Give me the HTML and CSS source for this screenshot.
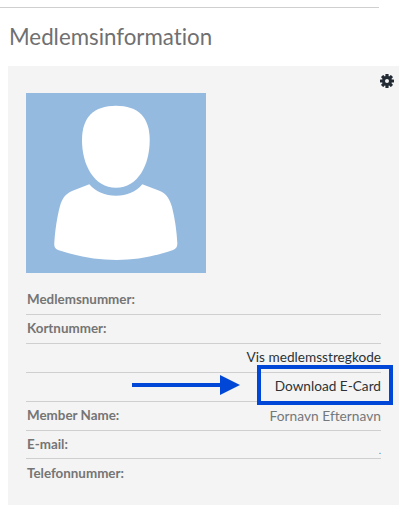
FILE: index.html
```html
<!DOCTYPE html>
<html lang="en">
<head>
    <meta charset="UTF-8">
    <title>Medlemsinformation</title>
    <link rel="stylesheet" href="styles.css">
</head>
<body>
    <div class="page">
        <hr class="top-rule">
        <h1 class="page-title">Medlemsinformation</h1>
        <div class="panel">
            <div class="panel-tools">
                <svg class="gear" viewBox="0 0 14 14" aria-label="Settings">
                    <g fill="#222a33">
                        <rect x="5.4" y="0" width="3.2" height="14" rx="0.5"/>
                        <rect x="5.4" y="0" width="3.2" height="14" rx="0.5" transform="rotate(45 7 7)"/>
                        <rect x="5.4" y="0" width="3.2" height="14" rx="0.5" transform="rotate(90 7 7)"/>
                        <rect x="5.4" y="0" width="3.2" height="14" rx="0.5" transform="rotate(135 7 7)"/>
                    </g>
                    <circle cx="7" cy="7" r="3.6" fill="none" stroke="#222a33" stroke-width="2.6"/>
                    <circle cx="7" cy="7" r="2" fill="#f4f4f4"/>
                </svg>
            </div>
            <svg class="avatar" viewBox="0 0 180 180">
                <rect width="180" height="180" fill="#95badf"/>
                <path fill="#fff" d="M90 12.7C68 12.7 56 24 56 47C56 72 68 94.7 90 94.7C112 94.7 123.7 72 123.7 47C123.7 24 112 12.7 90 12.7Z"/>
                <path fill="#fff" d="M63.3 91.3C70 99 79 102.7 90 102.7C101 102.7 110 99 116.3 91.3L134 98C141 101 144 107 146 114C149 126 150.7 138 151.3 150C151.5 154 150 155.5 147 157C130 163 110 167 90.7 167C70 167 50 163 32 157C29 155.5 28 154 28.3 150C29 138 31 124 34 113C36 106 39 101 46 98Z"/>
            </svg>
            <div class="info-list">
                <div class="info-row"><span class="label">Medlemsnummer:</span></div>
                <div class="info-row"><span class="label">Kortnummer:</span></div>
                <div class="info-row"><span class="link">Vis medlemsstregkode</span></div>
                <div class="info-row"><span class="link">Download E-Card</span></div>
                <div class="info-row"><span class="label">Member Name:</span><span class="value">Fornavn Efternavn</span></div>
                <div class="info-row short"><span class="label">E-mail:</span><span class="dot">.</span></div>
                <div class="info-row no-line"><span class="label">Telefonnummer:</span></div>
            </div>
        </div>
        <!-- annotation drawn over the screenshot -->
        <div class="callout-box"></div>
        <svg class="callout-arrow" width="108" height="20" viewBox="0 0 108 20">
            <rect x="0" y="8" width="90" height="4" fill="#0047d8"/>
            <path d="M88 0L108 10L88 20Z" fill="#0047d8"/>
        </svg>
    </div>
</body>
</html>
```

FILE: styles.css
```css
body {
    margin: 0;
    background: #fff;
    font-family: Lato, "Liberation Sans", sans-serif;
    font-variant-ligatures: none;
}
.page {
    position: relative;
    width: 406px;
    height: 526px;
    overflow: hidden;
}
.top-rule {
    width: 379px;
    height: 1px;
    margin: 7px 0 0;
    border: none;
    background: #cfcfcf;
}
.page-title {
    margin: 0;
    padding: 14px 0 0 9px;
    height: 44px;
    font-size: 22.3px;
    line-height: 30px;
    font-weight: 400;
    color: #6f7072;
}
.panel {
    width: 391px;
    height: 439px;
    margin-left: 8px;
    padding: 8px 18px 0;
    box-sizing: border-box;
    background: #f4f4f4;
}
.panel-tools {
    display: flex;
    justify-content: flex-end;
    height: 19px;
    margin-right: -13px;
}
.gear {
    width: 14px;
    height: 14px;
}
.avatar {
    display: block;
    width: 180px;
    height: 180px;
}
.info-list {
    margin-top: 13px;
}
.info-row {
    display: flex;
    justify-content: space-between;
    align-items: center;
    box-sizing: border-box;
    height: 29px;
    padding-bottom: 2px;
    border-bottom: 1px solid #cfcfcf;
    width: 355px;
    font-size: 13.4px;
}
.info-row:has(.link) {
    justify-content: flex-end;
}
.short {
    height: 28px;
}
.no-line {
    border-bottom: none;
}
.label {
    font-weight: 700;
    color: #757575;
    padding-left: 1px;
}
.link {
    color: #2d3236;
    font-size: 13.65px;
}
.value {
    color: #75787b;
    font-size: 13.75px;
}
.dot {
    color: #5a7fb0;
    font-size: 10px;
    align-self: flex-end;
}
.callout-box {
    position: absolute;
    left: 257px;
    top: 365px;
    width: 136px;
    height: 40px;
    box-sizing: border-box;
    border: 4px solid #0047d8;
}
.callout-arrow {
    position: absolute;
    left: 132px;
    top: 375px;
}
```
